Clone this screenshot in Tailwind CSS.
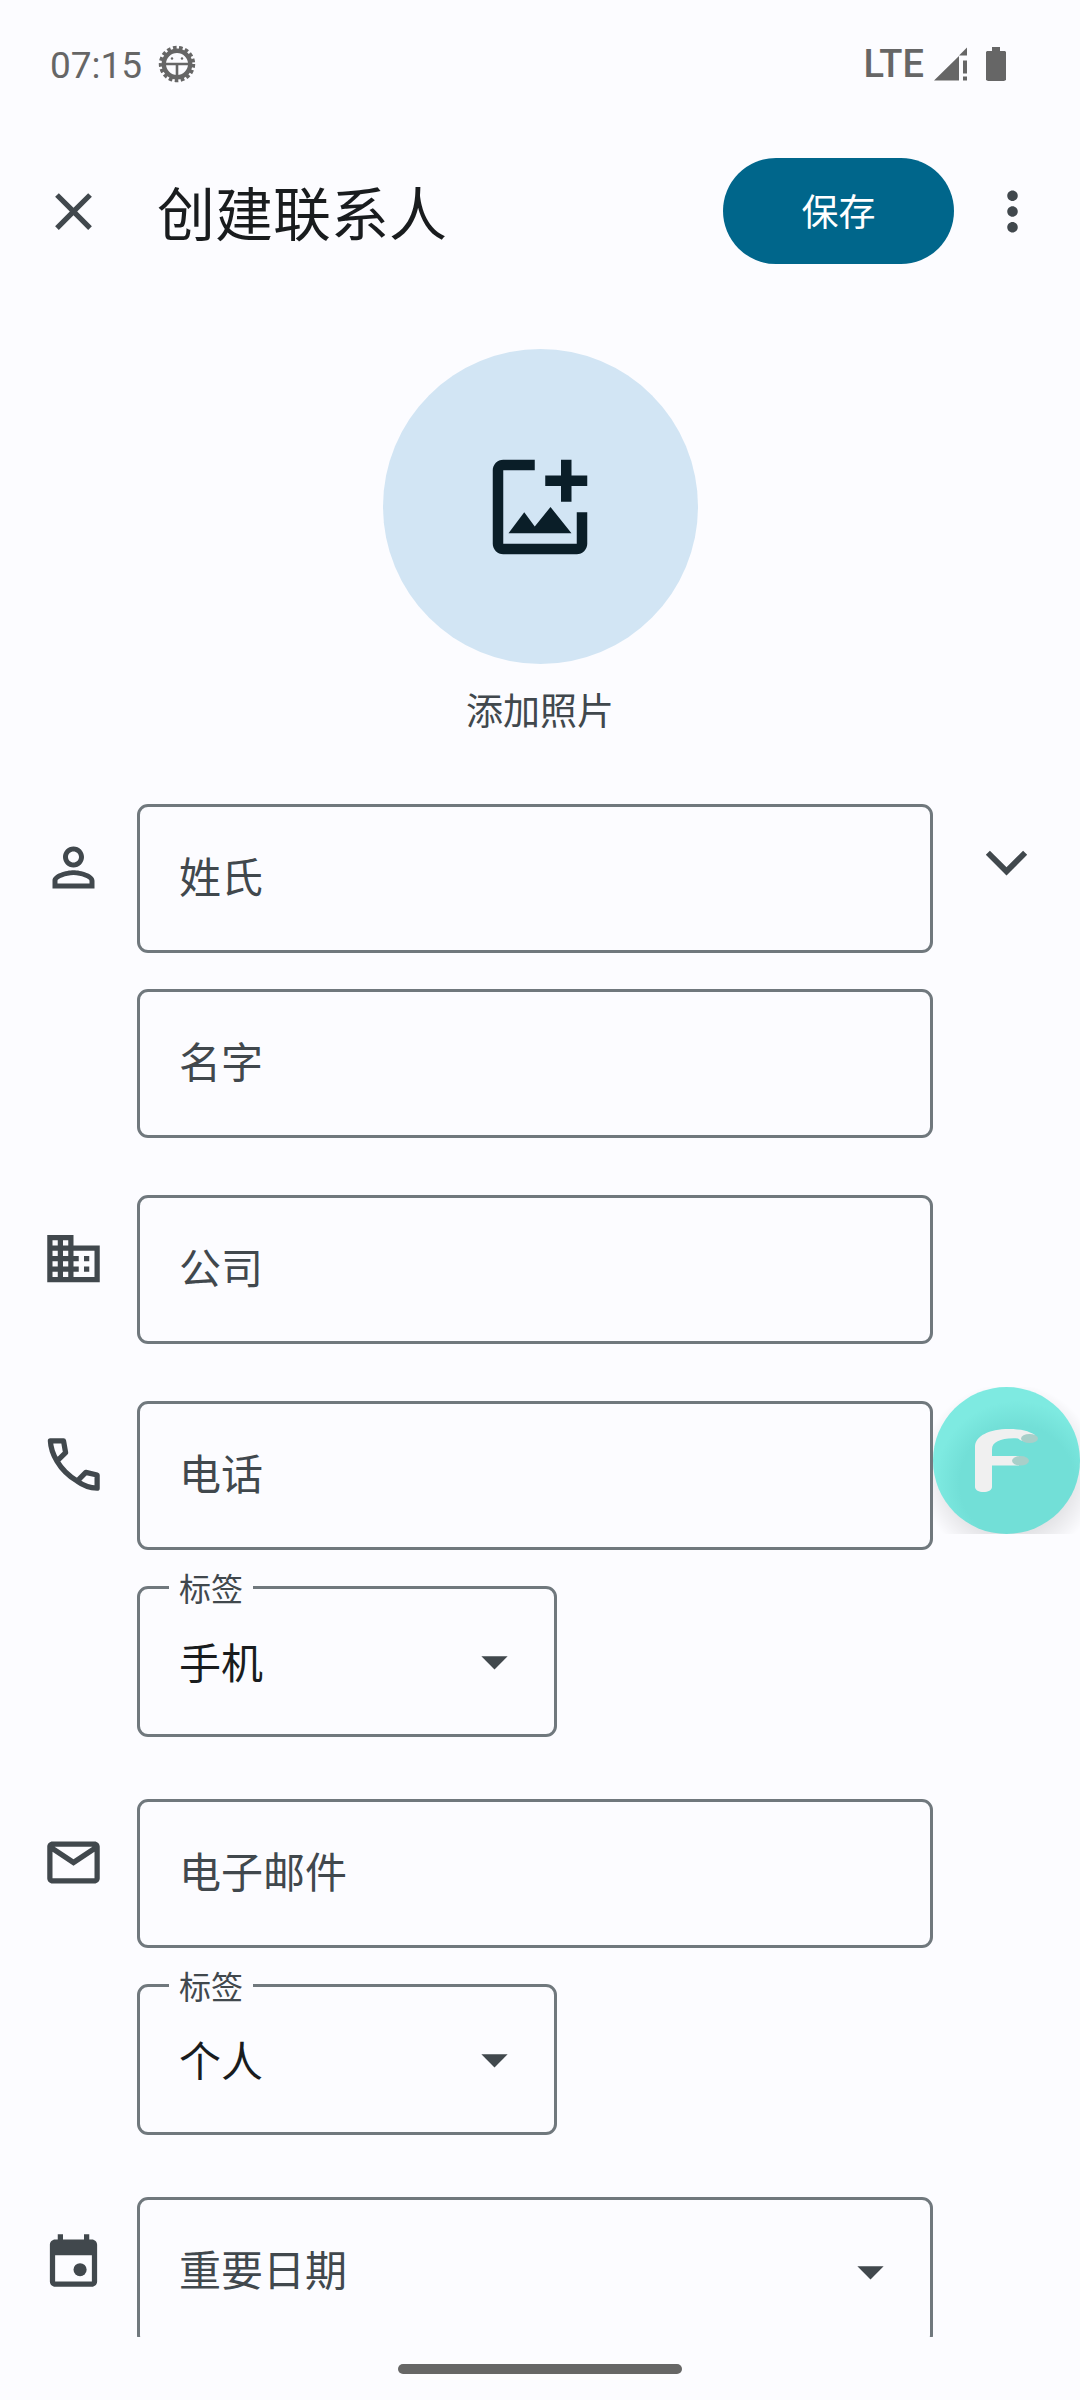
<!DOCTYPE html>
<html lang="zh-CN">
<head>
<meta charset="UTF-8">
<meta name="viewport" content="width=device-width, initial-scale=1">
<title>创建联系人</title>
<script src="https://cdn.jsdelivr.net/npm/@tailwindcss/browser@4"></script>
</head>
<body class="flex h-screen flex-col overflow-hidden bg-[#fcfcff] font-['Roboto','Noto_Sans_CJK_SC',sans-serif] text-[#41484d]">

<!-- Status bar -->
<div class="flex h-32 shrink-0 items-center justify-between pl-[50px] pr-[74px] text-[#666666]">
  <div class="flex items-center gap-4">
    <span class="pt-1 text-[37px] leading-[44px]">07:15</span>
    <svg class="size-[38px]" viewBox="-19 -19 38 38" fill="none" aria-hidden="true">
      <circle r="13.2" stroke="currentColor" stroke-width="4.400"/>
      <circle r="16.2" stroke="currentColor" stroke-width="4" stroke-dasharray="3.600 2.388"/>
      <path d="M-13 0H13M0 1V14" stroke="currentColor" stroke-width="2.600"/>
      <circle cx="-5" cy="-5.500" r="1.200" fill="currentColor"/>
      <circle cx="5" cy="-5.500" r="1.200" fill="currentColor"/>
    </svg>
  </div>
  <div class="flex items-center">
    <span class="mr-[10px] text-[38px] leading-[44px] font-medium">LTE</span>
    <svg class="mr-[19px] h-[34px] w-[33px]" viewBox="0 0 33 34" fill="currentColor" aria-hidden="true">
      <path d="M0 33.500L25 9v24.500zM33 .5V8.500H25zM29 13.500h4v13h-4zM29 29.500h4v4h-4z"/>
    </svg>
    <svg class="h-[34px] w-5" viewBox="0 0 20 34" fill="currentColor" aria-hidden="true">
      <path d="M6 0h8v4h5l1 1v28l-2 1H2l-2-1V5l1-1h5z"/>
    </svg>
  </div>
</div>

<!-- App bar -->
<header class="-mt-1 flex h-[166px] shrink-0 items-center pt-2 pl-[42px] pr-9">
  <button type="button" aria-label="关闭" class="size-[63px]">
    <svg class="size-full" viewBox="0 0 24 24" fill="currentColor"><path d="M19 6.410L17.590 5 12 10.590 6.410 5 5 6.410 10.590 12 5 17.590 6.410 19 12 13.410 17.590 19 19 17.590 13.410 12z"/></svg>
  </button>
  <h1 class="ml-[52px] flex-1 pt-[10px] text-[58px] leading-[84px] text-[#191c1e]">创建联系人</h1>
  <button type="submit" form="contact" class="h-[106px] w-[231px] rounded-full bg-[#00668b] pt-1.5 text-[37px] leading-[54px] text-white">保存</button>
  <button type="button" aria-label="更多选项" class="ml-[27px] size-[63px]">
    <svg class="size-full" viewBox="0 0 24 24" fill="currentColor"><path d="M12 8c1.100 0 2-.9 2-2s-.9-2-2-2-2 .9-2 2 .9 2 2 2zm0 2c-1.100 0-2 .9-2 2s.9 2 2 2 2-.9 2-2-.9-2-2-2zm0 6c-1.100 0-2 .9-2 2s.9 2 2 2 2-.9 2-2-.9-2-2-2z"/></svg>
  </button>
</header>

<main class="min-h-0 flex-1 overflow-hidden pt-[59px]">
  <!-- Photo -->
  <div class="flex flex-col items-center">
    <button type="button" aria-labelledby="photo-label" class="flex size-[315px] items-center justify-center rounded-full bg-[#d2e5f4] text-[#0a1e28]">
      <svg class="size-[126px]" viewBox="0 0 24 24" fill="currentColor"><path d="M11 3H5c-1.100 0-2 .9-2 2v14c0 1.100.9 2 2 2h14c1.100 0 2-.9 2-2v-6h-2v6H5V5h6zM16 3h2v3h3v2h-3v3h-2V8h-3V6h3zM6 17h12l-4-5-3 3.700L9 13z"/></svg>
    </button>
    <span id="photo-label" class="mt-[22px] text-[37px] leading-[54px]">添加照片</span>
  </div>

  <form id="contact" class="mt-16 flex flex-col gap-[57px]">
    <!-- Name -->
    <section class="flex items-start">
      <svg class="mr-8 ml-[42px] mt-8 size-[63px] shrink-0" viewBox="0 0 24 24" fill="currentColor" aria-hidden="true"><path d="M12 5.900c1.160 0 2.100.94 2.100 2.100s-.94 2.100-2.100 2.100S9.900 9.160 9.900 8s.94-2.100 2.100-2.100m0 9c2.970 0 6.100 1.460 6.100 2.100v1.100H5.900V17c0-.64 3.130-2.100 6.100-2.100M12 4C9.790 4 8 5.790 8 8s1.790 4 4 4 4-1.790 4-4-1.790-4-4-4zm0 9c-2.670 0-8 1.340-8 4v3h16v-3c0-2.660-5.330-4-8-4z"/></svg>
      <div class="flex min-w-0 flex-1 flex-col gap-9">
        <input type="text" aria-label="姓氏" placeholder="姓氏" class="h-[149px] w-full rounded-[11px] border-3 border-[#70787d] px-[39px] text-[42px] outline-none placeholder:text-[#41484d] placeholder:opacity-100">
        <input type="text" aria-label="名字" placeholder="名字" class="h-[149px] w-full rounded-[11px] border-3 border-[#70787d] px-[39px] text-[42px] outline-none placeholder:text-[#41484d] placeholder:opacity-100">
      </div>
      <div class="flex w-[147px] shrink-0 justify-center">
        <button type="button" aria-label="展开更多姓名字段" class="mt-7 size-[63px]">
          <svg class="size-full" viewBox="0 0 24 24" fill="none" stroke="currentColor" stroke-width="2.200"><path d="M4.900 7.900L12 15l7.100-7.100"/></svg>
        </button>
      </div>
    </section>

    <!-- Company -->
    <section class="flex items-start pr-[147px]">
      <svg class="mr-8 ml-[42px] mt-8 size-[63px] shrink-0" viewBox="0 0 24 24" fill="currentColor" aria-hidden="true"><path d="M12 7V3H2v18h20V7H12zM6 19H4v-2h2v2zm0-4H4v-2h2v2zm0-4H4V9h2v2zm0-4H4V5h2v2zm4 12H8v-2h2v2zm0-4H8v-2h2v2zm0-4H8V9h2v2zm0-4H8V5h2v2zm10 12h-8v-2h2v-2h-2v-2h2v-2h-2V9h8v10zm-2-8h-2v2h2v-2zm0 4h-2v2h2v-2z"/></svg>
      <input type="text" aria-label="公司" placeholder="公司" class="h-[149px] w-full min-w-0 flex-1 rounded-[11px] border-3 border-[#70787d] px-[39px] text-[42px] outline-none placeholder:text-[#41484d] placeholder:opacity-100">
    </section>

    <!-- Phone -->
    <section class="flex items-start pr-[147px]">
      <svg class="mr-8 ml-[42px] mt-8 size-[63px] shrink-0" viewBox="0 0 24 24" fill="none" stroke="currentColor" stroke-width="2" stroke-linejoin="round" aria-hidden="true"><path d="M3.200 3h5l.8 4.500-3.300 3.200C4.200 8.200 3.300 5.500 3.200 3zM5.700 10.700c1.900 3.200 4.500 5.700 7.700 7.600l3.300-3.300 4.300 1v5c-2.700-.1-5.300-1-7.600-2.700"/></svg>
      <div class="flex min-w-0 flex-1 flex-col gap-9">
        <input type="tel" aria-label="电话" placeholder="电话" class="h-[149px] w-full rounded-[11px] border-3 border-[#70787d] px-[39px] text-[42px] outline-none placeholder:text-[#41484d] placeholder:opacity-100">
        <div class="relative mb-[5px] w-[420px]">
          <select id="phone-type" class="h-[151px] w-full appearance-none rounded-[11px] border-3 border-[#70787d] bg-transparent pt-1.5 pr-24 pl-[39px] text-[42px] text-[#191c1e] outline-none"><option>手机</option><option>住宅</option><option>工作</option></select>
          <label for="phone-type" class="absolute -top-5 left-8 bg-[#fcfcff] px-[10px] text-[32px] leading-[48px]">标签</label>
          <svg class="pointer-events-none absolute top-11 right-[31px] size-[63px]" viewBox="0 0 24 24" fill="currentColor" aria-hidden="true"><path d="M7 10l5 5 5-5z"/></svg>
        </div>
      </div>
    </section>

    <!-- Email -->
    <section class="flex items-start pr-[147px]">
      <svg class="mr-8 ml-[42px] mt-8 size-[63px] shrink-0" viewBox="0 0 24 24" fill="currentColor" aria-hidden="true"><path d="M20 4H4c-1.100 0-2 .9-2 2v12c0 1.100.9 2 2 2h16c1.100 0 2-.9 2-2V6c0-1.100-.9-2-2-2zm-.8 2L12 10.800 4.800 6h14.400zM20 18H4V7.900l8 5.300 8-5.300V18z"/></svg>
      <div class="flex min-w-0 flex-1 flex-col gap-9">
        <input type="email" aria-label="电子邮件" placeholder="电子邮件" class="h-[149px] w-full rounded-[11px] border-3 border-[#70787d] px-[39px] text-[42px] outline-none placeholder:text-[#41484d] placeholder:opacity-100">
        <div class="relative mb-[5px] w-[420px]">
          <select id="email-type" class="h-[151px] w-full appearance-none rounded-[11px] border-3 border-[#70787d] bg-transparent pt-1.5 pr-24 pl-[39px] text-[42px] text-[#191c1e] outline-none"><option>个人</option><option>工作</option><option>其他</option></select>
          <label for="email-type" class="absolute -top-5 left-8 bg-[#fcfcff] px-[10px] text-[32px] leading-[48px]">标签</label>
          <svg class="pointer-events-none absolute top-11 right-[31px] size-[63px]" viewBox="0 0 24 24" fill="currentColor" aria-hidden="true"><path d="M7 10l5 5 5-5z"/></svg>
        </div>
      </div>
    </section>

    <!-- Significant date -->
    <section class="flex items-start pr-[147px]">
      <svg class="mr-8 ml-[42px] mt-8 size-[63px] shrink-0" viewBox="0 0 24 24" fill="currentColor" aria-hidden="true"><path fill-rule="evenodd" d="M19 4h-1V2h-2v2H8V2H6v2H5c-1.100 0-2 .9-2 2v14c0 1.100.9 2 2 2h14c1.100 0 2-.9 2-2V6c0-1.100-.9-2-2-2zm0 16H5V10h14z"/><circle cx="14.500" cy="15.500" r="2.500"/></svg>
      <div class="relative min-w-0 flex-1">
        <select aria-label="重要日期" class="h-[149px] w-full appearance-none rounded-[11px] border-3 border-[#70787d] bg-transparent pr-24 pl-[39px] text-[42px] outline-none"><option>重要日期</option></select>
        <svg class="pointer-events-none absolute top-[43px] right-[31px] size-[63px]" viewBox="0 0 24 24" fill="currentColor" aria-hidden="true"><path d="M7 10l5 5 5-5z"/></svg>
      </div>
    </section>
  </form>
</main>

<!-- Gesture bar -->
<footer class="flex h-[63px] shrink-0 items-center justify-center">
  <div class="h-[10px] w-[284px] rounded-full bg-[#666666]"></div>
</footer>

<!-- Floating assistant -->
<button type="button" aria-label="F" class="fixed top-[1387px] right-0 size-[147px] overflow-hidden">
  <svg class="size-full" viewBox="0 0 147 147" aria-hidden="true">
    <defs>
      <radialGradient id="shade" gradientUnits="userSpaceOnUse" cx="84" cy="96" r="82"><stop offset="0.700" stop-color="#72dfd7"/><stop offset="1" stop-color="#7eeae1"/></radialGradient>
      <radialGradient id="shadow" gradientUnits="userSpaceOnUse" cx="76" cy="86" r="90"><stop offset="0.680" stop-color="#000" stop-opacity=".1"/><stop offset="1" stop-color="#000" stop-opacity="0"/></radialGradient>
    </defs>
    <rect width="147" height="147" fill="url(#shadow)"/>
    <circle cx="73.500" cy="73.500" r="73.500" fill="url(#shade)"/>
    <path fill="#f0f0f0" d="M42 60C42 49 56 42 76 42c12 0 20 2 26 6l-8 7c-4-1-6-1-9-3.500-16-1-26 3-26 11V69h27v9.500H59V100c0 3-4 5-8.500 5S42 103 42 100z"/>
    <ellipse cx="96.500" cy="51.500" rx="8.500" ry="4.500" fill="#a8cfc9"/>
    <ellipse cx="87.500" cy="73.800" rx="8.500" ry="4.800" fill="#a8cfc9"/>
  </svg>
</button>
</body>
</html>
